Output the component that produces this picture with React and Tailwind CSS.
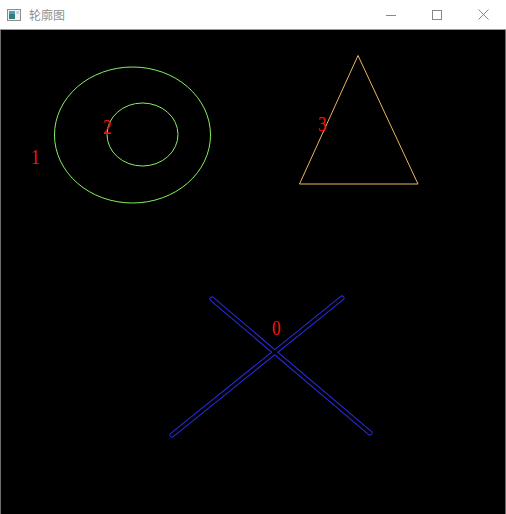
import React from 'react';

const TitleBar = () => (
  <div className="flex h-[30px] items-center bg-white border-b border-[#9a9a9a]">
    {/* 窗口图标 */}
    <svg width="14" height="12" viewBox="0 0 14 12" className="ml-[7px]">
      <rect x="0.5" y="0.5" width="13" height="11" fill="#f2f2f2" stroke="#8c8c8c" />
      <rect x="2" y="2" width="6" height="8" fill="#2f7f7a" />
      <rect x="2" y="2" width="6" height="3" fill="#4a9bc4" />
      <rect x="9" y="2" width="3" height="3" fill="#c8d8e0" />
    </svg>
    <span className="ml-[8px] text-[12px] text-[#8f8f8f] leading-none" style={{ fontFamily: '"Noto Sans CJK SC", sans-serif' }}>
      轮廓图
    </span>
    <div className="ml-auto flex h-full">
      <button className="flex h-full w-[46px] items-center justify-center">
        <svg width="10" height="10" viewBox="0 0 10 10">
          <line x1="0" y1="5.5" x2="10" y2="5.5" stroke="#888" strokeWidth="1" />
        </svg>
      </button>
      <button className="flex h-full w-[46px] items-center justify-center">
        <svg width="10" height="10" viewBox="0 0 10 10">
          <rect x="0.5" y="0.5" width="9" height="9" fill="none" stroke="#888" strokeWidth="1" />
        </svg>
      </button>
      <button className="flex h-full w-[46px] items-center justify-center">
        <svg width="11" height="11" viewBox="0 0 11 11">
          <path d="M0.5 0.5 L10.5 10.5 M10.5 0.5 L0.5 10.5" stroke="#888" strokeWidth="1" />
        </svg>
      </button>
    </div>
  </div>
);

// 编号文字（细窄的 Hershey 风格）
const Label = ({ x, y, children }) => (
  <text transform={`translate(${x} ${y}) scale(0.82 1)`}>{children}</text>
);

const Canvas = () => (
  <div className="flex-1 bg-black border-x border-[#6e6e6e]">
    <svg width="504" height="484" viewBox="1 30 504 484" className="block">
      {/* 同心椭圆 */}
      <ellipse cx="132.5" cy="135" rx="78" ry="68" fill="none" stroke="#86f060" strokeWidth="1" />
      <ellipse cx="142.5" cy="134.5" rx="35.5" ry="31.5" fill="none" stroke="#86f060" strokeWidth="1" />

      {/* 三角形 */}
      <polygon points="358,55.5 299.5,184 418,184" fill="none" stroke="#e8b860" strokeWidth="1" />

      {/* 交叉线轮廓 */}
      <g strokeLinecap="round">
        <line x1="212" y1="299" x2="370" y2="433" stroke="#2a2ae0" strokeWidth="5" />
        <line x1="172" y1="435" x2="342" y2="298" stroke="#2a2ae0" strokeWidth="5" />
        <line x1="212" y1="299" x2="370" y2="433" stroke="#000" strokeWidth="3" />
        <line x1="172" y1="435" x2="342" y2="298" stroke="#000" strokeWidth="3" />
      </g>

      {/* 编号 */}
      <g fill="#ff1010" fontSize="21" style={{ fontFamily: '"Liberation Serif", serif' }}>
        <Label x={31} y={164}>1</Label>
        <Label x={103} y={134}>2</Label>
        <Label x={318} y={131}>3</Label>
        <Label x={272} y={335}>0</Label>
      </g>
    </svg>
  </div>
);

export default function App() {
  return (
    <div className="flex h-[514px] w-[506px] flex-col overflow-hidden bg-white">
      <TitleBar />
      <Canvas />
    </div>
  );
}
